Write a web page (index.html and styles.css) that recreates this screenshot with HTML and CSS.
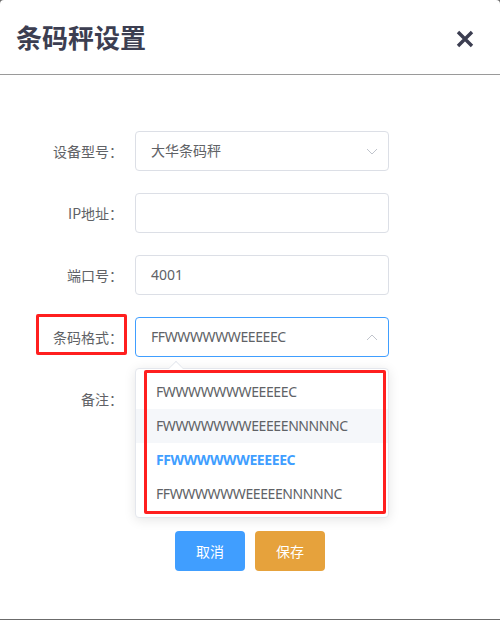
FILE: index.html
```html
<!DOCTYPE html>
<html lang="zh-CN">
<head>
<meta charset="utf-8">
<title>条码秤设置</title>
<link rel="stylesheet" href="styles.css">
</head>
<body>
<div class="dialog">
  <div class="header">
    <h2 class="title">条码秤设置</h2>
    <button class="close" type="button" aria-label="关闭">
      <svg width="18" height="18" viewBox="0 0 18 18"><path d="M2 2L16 16M16 2L2 16" stroke="#3c3e51" stroke-width="3.4" stroke-linecap="butt" fill="none"/></svg>
    </button>
  </div>
  <div class="body">
    <div class="form">
      <div class="row">
        <div class="label">设备型号：</div>
        <div class="control">
          <div class="input">大华条码秤</div>
          <svg class="caret" width="12" height="7" viewBox="0 0 12 7"><path d="M1 1L6 6L11 1" stroke="#c0c4cc" stroke-width="1" fill="none"/></svg>
        </div>
      </div>
      <div class="row">
        <div class="label">IP地址：</div>
        <div class="control"><div class="input"></div></div>
      </div>
      <div class="row">
        <div class="label">端口号：</div>
        <div class="control"><div class="input">4001</div></div>
      </div>
      <div class="row">
        <div class="label">条码格式：</div>
        <div class="mark mark-label"></div>
        <div class="control">
          <div class="input focused code">FFWWWWWWEEEEEC</div>
          <svg class="caret" width="12" height="7" viewBox="0 0 12 7"><path d="M1 6L6 1L11 6" stroke="#c0c4cc" stroke-width="1" fill="none"/></svg>
          <div class="dropdown">
            <div class="arrow"></div>
            <ul class="options">
              <li class="option code">FWWWWWWWEEEEEC</li>
              <li class="option code hover">FWWWWWWWEEEEENNNNNC</li>
              <li class="option code selected">FFWWWWWWEEEEEC</li>
              <li class="option code">FFWWWWWWEEEEENNNNNC</li>
            </ul>
            <div class="mark mark-list"></div>
          </div>
        </div>
      </div>
      <div class="row">
        <div class="label">备注：</div>
        <div class="control"><div class="textarea"></div></div>
      </div>
    </div>
    <div class="actions">
      <button class="btn btn-cancel" type="button">取消</button>
      <button class="btn btn-save" type="button">保存</button>
    </div>
  </div>
</div>
</body>
</html>
```
FILE: styles.css
```css
* { box-sizing: border-box; }
html, body {
  margin: 0;
  padding: 0;
  background: #6b6b6b;
}
body {
  font-family: "Noto Sans", "Noto Sans CJK SC", sans-serif;
  font-size: 14px;
  color: #606266;
}
.dialog {
  width: 500px;
  height: 619px;
  background: #fff;
  border-radius: 4px 4px 0 0;
}
.header {
  height: 75px;
  display: flex;
  align-items: center;
  justify-content: space-between;
  padding: 0 26px 0 16px;
  border-bottom: 1px solid #9a9a9a;
}
.title {
  margin: 0;
  font-family: "Noto Sans CJK SC", sans-serif;
  font-size: 26px;
  font-weight: 700;
  color: #3c3e51;
  line-height: 1;
  letter-spacing: 0;
}
.close {
  border: 0;
  background: none;
  padding: 0;
  width: 18px;
  height: 18px;
  display: flex;
  margin-top: 4px;
}
.body {
  padding-top: 56px;
}
.form {
  display: flex;
  flex-direction: column;
  gap: 22px;
}
.row {
  position: relative;
  display: flex;
  align-items: flex-start;
}
.label {
  width: 135px;
  padding-right: 12px;
  text-align: right;
  line-height: 40px;
  height: 40px;
  font-family: "Noto Sans CJK SC", sans-serif;
  color: #606266;
}
.control {
  position: relative;
  width: 254px;
}
.input {
  height: 40px;
  line-height: 38px;
  border: 1px solid #dcdfe6;
  border-radius: 4px;
  padding: 0 15px;
  color: #606266;
  font-family: "Noto Sans", "Noto Sans CJK SC", sans-serif;
}
.input.focused {
  border-color: #409eff;
}
.code {
  letter-spacing: -0.4px;
}
.textarea {
  height: 130px;
  border: 1px solid #dcdfe6;
  border-radius: 4px;
}
.caret {
  position: absolute;
  right: 11px;
  top: 17px;
}
.dropdown {
  position: absolute;
  left: 0;
  top: 51px;
  width: 254px;
  background: #fff;
  border: 1px solid #e4e7ed;
  border-radius: 4px;
  box-shadow: 0 2px 12px 0 rgba(0, 0, 0, 0.1);
  z-index: 5;
}
.arrow {
  position: absolute;
  top: -7px;
  left: 34px;
  width: 12px;
  height: 12px;
  background: #fff;
  border-left: 1px solid #e4e7ed;
  border-top: 1px solid #e4e7ed;
  transform: rotate(45deg) scale(0.85);
}
.options {
  list-style: none;
  margin: 0;
  padding: 6px 0;
  position: relative;
}
.option {
  height: 34px;
  line-height: 34px;
  padding: 0 20px;
  color: #606266;
  white-space: nowrap;
}
.option.hover {
  background: #f5f7fa;
}
.option.selected {
  color: #409eff;
  font-weight: 700;
}
.mark {
  position: absolute;
  border: 3px solid #ff1f1f;
  border-radius: 2px;
  pointer-events: none;
  z-index: 6;
}
.mark-label {
  left: 36px;
  top: -3px;
  width: 91px;
  height: 41px;
}
.mark-list {
  left: 8px;
  top: 1px;
  width: 242px;
  height: 144px;
}
.actions {
  display: flex;
  justify-content: center;
  gap: 10px;
  margin-top: 22px;
}
.btn {
  width: 70px;
  height: 40px;
  border: 0;
  border-radius: 4px;
  color: #fff;
  font-family: "Noto Sans CJK SC", sans-serif;
  font-size: 14px;
  padding: 0;
}
.btn-cancel { background: #409eff; }
.btn-save { background: #e6a23c; }
```
